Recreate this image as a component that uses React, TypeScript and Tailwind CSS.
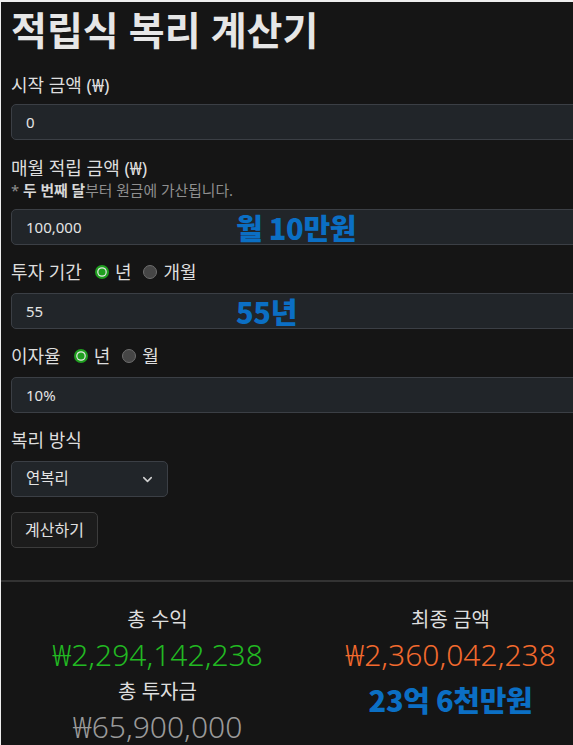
import { ChevronDown } from "lucide-react";

const sans = "font-['Noto_Sans','Noto_Sans_CJK_KR',sans-serif]";
const annot = "font-['Noto_Sans_CJK_KR',sans-serif] font-black text-[#0b6fc4] text-[29px] leading-[36px] tracking-[-0.3px]";
const money = "mt-[4px] text-[30px] leading-[36px] font-light font-['Noto_Sans',sans-serif]";
const label = "text-[18px] leading-6 text-[#dedede]";

function Radio({ checked }: { checked?: boolean }) {
  return checked ? (
    <svg width="14" height="14" viewBox="0 0 14 14" className="shrink-0">
      <circle cx="7" cy="7" r="7" fill="#1f9e1f" />
      <circle cx="7" cy="7" r="4.8" fill="#e8e8e8" />
      <circle cx="7" cy="7" r="3.6" fill="#1f9e1f" />
    </svg>
  ) : (
    <svg width="14" height="14" viewBox="0 0 14 14" className="shrink-0">
      <circle cx="7" cy="7" r="6.5" fill="#464646" stroke="#6f6f6f" strokeWidth="1" />
    </svg>
  );
}

function Field({ value, note }: { value: string; note?: string }) {
  return (
    <div className="relative h-9 w-full rounded-[5px] border border-[#3b3f45] bg-[#212529] px-[14px] flex items-center text-[15px] text-[#e4e4e4]">
      {value}
      {note && <span className={`absolute left-[224px] top-[-1px] ${annot}`}>{note}</span>}
    </div>
  );
}

function Unit({ items }: { items: [string, boolean][] }) {
  return (
    <span className="flex items-center gap-[12px] ml-[13px]">
      {items.map(([t, c]) => (
        <span key={t} className="flex items-center gap-[6px]">
          <Radio checked={c} />
          {t}
        </span>
      ))}
    </span>
  );
}

export default function App() {
  return (
    <div className={`min-h-[745px] w-full overflow-hidden bg-[#151515] border-t-2 border-l border-[#eeeeee] ${sans}`}>
      <div className="w-[586px] pl-[10px] pt-[5px]">
        <h1 className="text-[39px] leading-[46px] font-bold text-[#e6e6e6] mb-[20px]">적립식 복리 계산기</h1>

        <div className={`${label} mb-[7px]`}>시작 금액 (₩)</div>
        <Field value="0" />

        <div className={`${label} mt-[16px]`}>매월 적립 금액 (₩)</div>
        <div className="text-[14.8px] leading-5 text-[#8f8f8f] mb-[9px]">
          * <b className="text-[#d8d8d8]">두 번째 달</b>부터 원금에 가산됩니다.
        </div>
        <Field value="100,000" note="월 10만원" />

        <div className={`flex items-center ${label} mt-[15px] mb-[9px]`}>
          투자 기간
          <Unit items={[["년", true], ["개월", false]]} />
        </div>
        <Field value="55" note="55년" />

        <div className={`flex items-center ${label} mt-[15px] mb-[9px]`}>
          이자율
          <Unit items={[["년", true], ["월", false]]} />
        </div>
        <Field value="10%" />

        <div className={`${label} mt-[15px] mb-[9px]`}>복리 방식</div>
        <div className="h-9 w-[157px] rounded-[5px] border border-[#3b3f45] bg-[#212529] pl-[14px] pr-[12px] flex items-center justify-between text-[15.5px] text-[#e4e4e4]">
          연복리
          <ChevronDown size={15} strokeWidth={2.5} className="text-[#d0d0d0]" />
        </div>

        <button className="mt-[15px] h-9 w-[87px] rounded-[5px] border border-[#3c3c3c] bg-[#1c1c1c] text-[16px] text-[#e0e0e0]">
          계산하기
        </button>
      </div>

      <div className="mt-[32px] h-[2px] w-full bg-[#333333]" />

      <div className="w-[586px] ml-[10px] grid grid-cols-2 pt-[25px] text-center">
        <div className="flex flex-col items-center">
          <div className="text-[20px] leading-[26px] text-[#dedede]">총 수익</div>
          <div className={`${money} text-[#22b922]`}>₩2,294,142,238</div>
          <div className="mt-[6px] text-[20px] leading-[26px] text-[#dedede]">총 투자금</div>
          <div className={`${money} text-[#9a9a9a]`}>₩65,900,000</div>
        </div>
        <div className="flex flex-col items-center">
          <div className="text-[20px] leading-[26px] text-[#dedede]">최종 금액</div>
          <div className={`${money} text-[#f26a2e]`}>₩2,360,042,238</div>
          <div className={`mt-[8px] ${annot}`}>23억 6천만원</div>
        </div>
      </div>
    </div>
  );
}
